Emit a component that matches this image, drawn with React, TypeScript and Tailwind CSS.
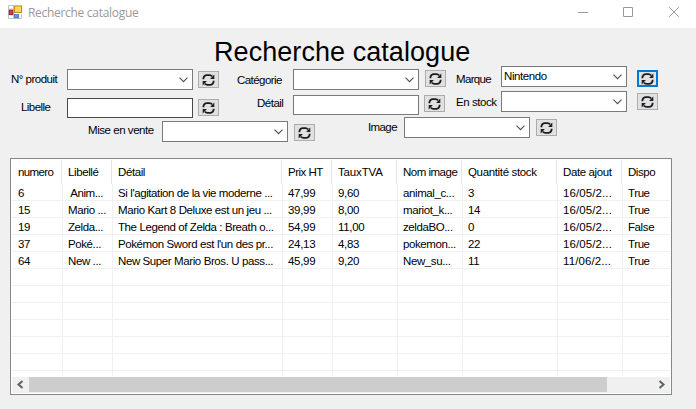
import React from "react";

function RefreshButton({ className = "", active = false }: { className?: string; active?: boolean }) {
  return (
    <button
      className={`flex h-[17px] w-[21px] shrink-0 items-center justify-center bg-[#e1e1e1] ${
        active ? "border-2 border-[#0078d7]" : "border border-[#adadad]"
      } ${className}`}
    >
      <svg className="h-[12px] w-[13px] shrink-0" viewBox="0 0 13 12" fill="none" stroke="#1c1c22" strokeWidth="1.8">
        <path d="M1.4 5.2V4.4Q1.8 1.6 4.4 1.1H7.6Q9 1.3 10.2 2.4" />
        <path d="M12.3 .4V5H8.1Z" fill="#1c1c22" stroke="none" />
        <path d="M11.6 6.8V7.6Q11.2 10.4 8.6 10.9H5.4Q4 10.7 2.8 9.6" />
        <path d="M.7 11.6V7H4.9Z" fill="#1c1c22" stroke="none" />
      </svg>
    </button>
  );
}

function Combo({ value = "", className = "" }: { value?: string; className?: string }) {
  return (
    <div className={`flex h-[21px] w-[126px] shrink-0 justify-between border border-[#7a7a7a] bg-white pl-[2px] pr-[4px] ${className}`}>
      <span className="leading-[19px] tracking-[-0.4px]">{value}</span>
      <svg className="mt-[7px] h-[6px] w-[9px]" viewBox="0 0 9 6" fill="none" stroke="#505050" strokeWidth="1.1">
        <path d="M.5 .7 4.5 4.7 8.5 .7" />
      </svg>
    </div>
  );
}

function Field({ className = "", dark = false }: { className?: string; dark?: boolean }) {
  return <div className={`h-[20px] w-[126px] shrink-0 border bg-white ${dark ? "border-[#484848]" : "border-[#7a7a7a]"} ${className}`} />;
}

function Label({ children, className = "" }: { children: string; className?: string }) {
  return <span className={`shrink-0 whitespace-pre leading-[13px] ${className}`}>{children}</span>;
}

const headers = ["numero", "Libellé", "Détail", "Prix HT", "TauxTVA", "Nom image", "Quantité stock", "Date ajout", "Dispo"];
const headerTracking = [
  "tracking-[-0.6px]", "tracking-[-0.4px]", "tracking-[-0.4px]", "tracking-[-0.5px]", "tracking-[-0.15px]",
  "tracking-[-0.5px]", "tracking-[-0.35px]", "tracking-[-0.4px]", "tracking-[-0.45px]",
];
const bodyTracking = [
  "tracking-[-0.4px]", "tracking-[-0.4px]", "tracking-[-0.4px]", "tracking-[-0.3px]", "tracking-[-0.3px]",
  "tracking-[-0.4px]", "tracking-[-0.3px]", "tracking-[0.1px]", "tracking-[-0.4px]",
];
const rows = [
  ["6", " Anim...", "Si l'agitation de la vie moderne ...", "47,99", "9,60", "animal_c...", "3", "16/05/2...", "True"],
  ["15", "Mario ...", "Mario Kart 8 Deluxe est un jeu ...", "39,99", "8,00", "mariot_k...", "14", "16/05/2...", "True"],
  ["19", "Zelda...", "The Legend of Zelda : Breath o...", "54,99", "11,00", "zeldaBO...", "0", "16/05/2...", "False"],
  ["37", "Poké...", "Pokémon Sword est l'un des pr...", "24,13", "4,83", "pokemon...", "22", "16/05/2...", "True"],
  ["64", "New ...", "New Super Mario Bros. U pass...", "45,99", "9,20", "New_su...", "11", "11/06/2...", "True"],
];
const emptyRow = ["", "", "", "", "", "", "", "", ""];
const bodyGrid = "grid grid-cols-[51px_50px_170px_50px_65px_65px_95px_65px_47px]";

function Catalogue() {
  return (
    <div className="ml-[10px] mt-[16px] h-[237px] w-[662px] border border-[#828790] bg-white px-px pt-px">
      <div className="grid h-[24px] grid-cols-[50px_50px_170px_50px_65px_65px_95px_65px_48px]">
        {headers.map((h, i) => (
          <div key={h} className={`whitespace-nowrap border-r pl-[6px] leading-[24px] ${headerTracking[i]} ${i === 8 ? "border-transparent" : "border-[#e5e5e5]"}`}>
            {h}
          </div>
        ))}
      </div>
      {[...rows, emptyRow, emptyRow, emptyRow, emptyRow, emptyRow, emptyRow].map((r, y) => (
        <div key={y} className={`${bodyGrid} h-[17px] border-b border-[#f0f0f0]`}>
          {r.map((c, x) => (
            <div key={x} className={`overflow-hidden whitespace-pre leading-[18px] ${bodyTracking[x]} ${x === 0 ? "pl-[6px]" : "pl-[5px]"} ${x === 8 ? "" : "border-r border-[#f0f0f0]"}`}>
              {c}
            </div>
          ))}
        </div>
      ))}
      <div className={`${bodyGrid} mb-px h-[5px]`}>
        {emptyRow.map((_, x) => (
          <div key={x} className={x === 8 ? "" : "border-r border-[#f0f0f0]"} />
        ))}
      </div>
      <div className="flex h-[16px] bg-[#f0f0f0]">
        <svg className="h-[15px] w-[17px]" viewBox="0 0 17 15" fill="none" stroke="#606060" strokeWidth="2">
          <path d="M10.5 4 6.5 7.5 10.5 11" />
        </svg>
        <div className="h-[15px] w-[578px] bg-[#cdcdcd]" />
        <svg className="ml-auto h-[15px] w-[17px]" viewBox="0 0 17 15" fill="none" stroke="#606060" strokeWidth="2">
          <path d="M6.5 4 10.5 7.5 6.5 11" />
        </svg>
      </div>
    </div>
  );
}

export default function App() {
  return (
    <div className="h-[409px] w-[696px] overflow-hidden bg-[#f0f0f0] font-['Liberation_Sans',Arial,sans-serif] text-[11.5px] text-black">
      <header className="flex h-[28px] bg-white pl-[8px]">
        <svg className="mt-[5px] h-[14px] w-[14px]" viewBox="0 0 14 14">
          <path d="M.5 .5H5.5M.5 .5V13.5H13.5V9M5.5 .5V13.5M.5 4H5" fill="none" stroke="#c4c4c4" />
          <rect x="1.3" y="5.2" width="3.4" height="4.4" fill="#d8423a" stroke="#9b1c1c" />
          <rect x="6.5" y=".9" width="7" height="6.6" fill="#ffd65c" stroke="#c08a1c" />
          <rect x="6.3" y="9.3" width="4.5" height="3.6" fill="#5b93ee" stroke="#4169b8" strokeWidth=".6" />
        </svg>
        <span className="ml-[6px] font-['Open_Sans',sans-serif] text-[12px] leading-[26px] tracking-[-0.3px] text-[#999]">Recherche catalogue</span>
        <svg className="ml-auto mr-[16px] mt-[6px] h-[12px] w-[102px]" viewBox="0 0 102 12" fill="none" stroke="#999">
          <path d="M0 6.5H10M45.5 1.5H54.5V10.5H45.5ZM91.2 1.2 100.8 10.8M100.8 1.2 91.2 10.8" />
        </svg>
      </header>
      <h1 className="ml-[214px] mt-[8px] h-[30px] whitespace-nowrap text-[27px] leading-[32px] tracking-[0.06px]">Recherche catalogue</h1>
      <section className="flex h-[51px]">
        <div className="w-[219px] pt-[3px]">
          <div className="flex h-[29px]">
            <Label className="ml-[11px] mt-[4px] w-[56px] tracking-[-0.5px]">N° produit</Label>
            <Combo />
            <RefreshButton className="ml-[5px] mt-[2px]" />
          </div>
          <div className="flex">
            <Label className="ml-[21px] mt-[3px] w-[46px] tracking-[-0.55px]">Libelle</Label>
            <Field dark />
            <RefreshButton className="ml-[5px] mt-[1px]" />
          </div>
        </div>
        <div className="ml-[18px] w-[209px] pt-[3px]">
          <div className="flex h-[26px]">
            <Label className="mt-[5px] w-[56px] tracking-[-0.55px]">Catégorie</Label>
            <Combo />
            <RefreshButton className="ml-[6px] mt-[1px]" />
          </div>
          <div className="flex">
            <Label className="ml-[20px] mt-[2px] w-[36px] tracking-[-0.5px]">Détail</Label>
            <Field />
            <RefreshButton className="ml-[5px]" />
          </div>
        </div>
        <div className="ml-[10px] w-[202px]">
          <div className="flex h-[25px]">
            <Label className="mt-[7px] w-[45px] tracking-[-0.65px]">Marque</Label>
            <Combo value="Nintendo" />
            <RefreshButton active className="ml-[10px] mt-[4px]" />
          </div>
          <div className="flex">
            <Label className="mt-[5px] w-[45px] tracking-[-0.45px]">En stock</Label>
            <Combo />
            <RefreshButton className="ml-[10px] mt-[2px]" />
          </div>
        </div>
      </section>
      <section className="flex h-[25px] pl-[88px]">
        <Label className="mt-[7px] w-[74px] tracking-[-0.45px]">Mise en vente</Label>
        <Combo className="mt-[4px]" />
        <RefreshButton className="ml-[6px] mt-[7px]" />
        <Label className="ml-[53px] mt-[4px] w-[36px] tracking-[-0.6px]">Image</Label>
        <Combo />
        <RefreshButton className="ml-[6px] mt-[2px]" />
      </section>
      <Catalogue />
    </div>
  );
}
